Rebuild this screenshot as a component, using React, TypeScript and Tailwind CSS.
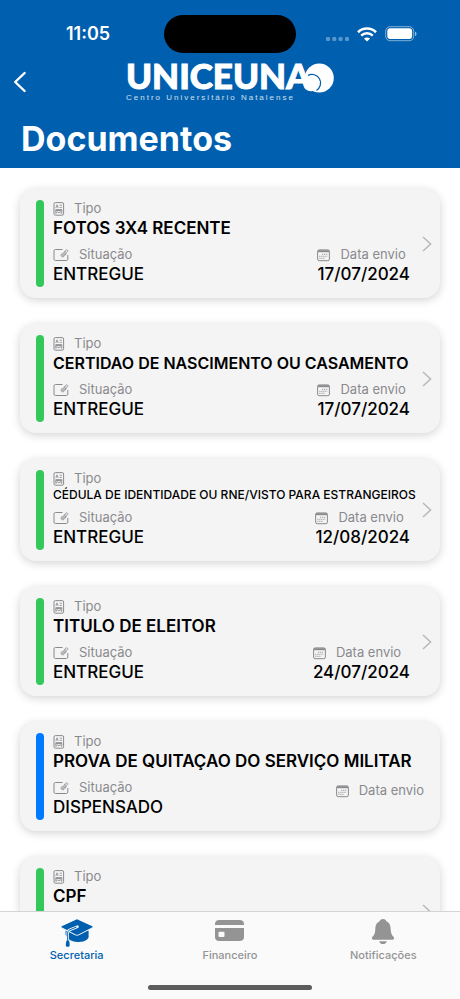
import React from 'react';

type Documento = {
    tipo: string;
    situacao: 'ENTREGUE' | 'DISPENSADO';
    dataEnvio?: string;
    size?: 'md' | 'sm';
};

const documentos: Documento[] = [
    { tipo: 'FOTOS 3X4 RECENTE', situacao: 'ENTREGUE', dataEnvio: '17/07/2024' },
    { tipo: 'CERTIDAO DE NASCIMENTO OU CASAMENTO', situacao: 'ENTREGUE', dataEnvio: '17/07/2024', size: 'md' },
    { tipo: 'CÉDULA DE IDENTIDADE OU RNE/VISTO PARA ESTRANGEIROS', situacao: 'ENTREGUE', dataEnvio: '12/08/2024', size: 'sm' },
    { tipo: 'TITULO DE ELEITOR', situacao: 'ENTREGUE', dataEnvio: '24/07/2024' },
    { tipo: 'PROVA DE QUITAÇAO DO SERVIÇO MILITAR', situacao: 'DISPENSADO' },
    { tipo: 'CPF', situacao: 'ENTREGUE', dataEnvio: '17/07/2024' },
];

const tipoClass = {
    lg: 'text-[17px] leading-5 font-semibold',
    md: 'text-[16px] leading-5 font-semibold',
    sm: 'text-[12px] leading-[13px] font-medium',
};

const TipoIcon = () => (
    <svg width="12" height="14" viewBox="0 0 12 14" fill="none" stroke="currentColor" aria-hidden="true">
        <rect x="1" y="0.6" width="9.6" height="12.6" rx="1.4" />
        <path d="M2.8 5.8 4 2.8l1.2 3M3.2 4.9h1.6M6.6 3.2H9M6.6 5.4H9" strokeWidth="0.8" />
        <path d="M2.8 11.4V7.6h6v3.8l-1.6-1.6-1.4 1.2-1.2-1.2z" strokeWidth="0.9" />
        <path d="M3 8.6h5.6" strokeWidth="1" />
    </svg>
);

const SituacaoIcon = () => (
    <svg width="16" height="14" viewBox="0 0 16 14" fill="none" stroke="currentColor" aria-hidden="true">
        <path d="M9.5 1.5H2.4C1.5 1.5 1 2 1 2.9v8.2c0 .9.5 1.4 1.4 1.4h11c.9 0 1.4-.5 1.4-1.4V7" />
        <path d="m14 3.6-3.300 4c-.8.9-2.200.1-1.500-1.100l3.400-4.200c1.100-1.200 3 0 2.100 1.500M12.800 3.300 9.800 7M8.800 5.400c-1.100 1.300-.9 3.300.7 3.500 1 0 1.600-.5 2.100-1.200l2-2.500" strokeWidth="0.8" />
    </svg>
);

const CalendarioIcon = () => (
    <svg width="13" height="13" viewBox="0 0 13 13" fill="none" stroke="currentColor" aria-hidden="true">
        <rect x="0.6" y="0.9" width="11.8" height="10.8" rx="1.6" />
        <path d="M.8 2.2h11.4" strokeWidth="2" />
        <path d="M5.2 5.3h5.4M2.4 7.3h8.2M2.4 9.3h6" strokeWidth="1" strokeDasharray="1 1" />
    </svg>
);

const ChevronIcon = () => (
    <svg width="10" height="16" viewBox="0 0 10 16" fill="none" stroke="currentColor" strokeWidth="1.5" aria-hidden="true">
        <path d="m1 1 7.6 7L1 15" />
    </svg>
);

const Logo = () => (
    <div className="relative w-[208px] text-white">
        <div className="h-[30px] whitespace-nowrap font-['Lato',sans-serif] text-[35px] leading-6 font-black [-webkit-text-stroke:1px_white]">UNICEUNA</div>
        <div className="whitespace-nowrap font-['Liberation_Sans',sans-serif] text-[8px] leading-[9px] tracking-[2px] text-white/80">Centro Universitário Natalense</div>
        <svg className="absolute top-0 right-0" width="34" height="30" viewBox="0 0 34 30" aria-hidden="true">
            <circle cx="19.3" cy="15" r="14.5" fill="#fff" />
            <circle cx="11" cy="20.5" r="7.8" fill="#fff" />
            <path d="M8 12.4a8.6 8.6 0 0 1 8.4 15" fill="none" stroke="#005fae" strokeWidth="1.2" />
        </svg>
    </div>
);

const StatusBar = () => (
    <div className="grid grid-cols-[1fr_auto_1fr] items-center pt-[15px] text-white">
        <div className="pl-3 text-center text-[18px] leading-6 font-semibold">11:05</div>
        <div className="h-[38px] w-[132px] rounded-full bg-black" />
        <div className="flex items-center gap-2 pl-[30px]">
            <svg width="23" height="18" viewBox="0 0 23 18" fill="#fff" opacity="0.35" aria-hidden="true">
                <rect x="0" y="12" width="4" height="4" rx="1.2" />
                <rect x="6.3" y="12" width="4" height="4" rx="1.2" />
                <rect x="12.6" y="12" width="4" height="4" rx="1.2" />
                <rect x="19" y="12" width="4" height="4" rx="1.2" />
            </svg>
            <svg width="20" height="15" viewBox="0 0 20 15" fill="none" stroke="#fff" strokeWidth="2.6" aria-hidden="true">
                <path d="M1 5.2c5-4.9 13-4.9 18 0" />
                <path d="M4.2 8.6c3.3-3.1 8.3-3.1 11.6 0" />
                <path d="M10 14.6 6.9 11.5c1.7-1.5 4.5-1.5 6.2 0z" fill="#fff" stroke="none" />
            </svg>
            <svg width="32" height="16" viewBox="0 0 32 16" aria-hidden="true">
                <rect x="0.7" y="0.7" width="28" height="14" rx="4.4" fill="none" stroke="#fff" strokeOpacity="0.5" />
                <rect x="2.3" y="2.3" width="24.8" height="10.8" rx="3" fill="#fff" />
                <path d="M30 5.4c2 .8 2 3.8 0 4.6z" fill="#fff" fillOpacity="0.6" />
            </svg>
        </div>
    </div>
);

const Header = () => (
    <header className="shrink-0 bg-[#005fae] pb-[9px]">
        <StatusBar />
        <div className="grid h-[58px] grid-cols-[1fr_auto_1fr] items-center">
            <button type="button" aria-label="Voltar" className="w-10 pl-[13px] text-white">
                <svg width="14" height="22" viewBox="0 0 14 22" fill="none" stroke="currentColor" strokeWidth="2.4" strokeLinecap="round" strokeLinejoin="round">
                    <path d="M11.6 2 2.2 11l9.4 9" />
                </svg>
            </button>
            <Logo />
        </div>
        <h1 className="pt-2 pl-[21px] text-[34px] leading-10 font-bold text-white">Documentos</h1>
    </header>
);

const DocumentoCard = ({ doc }: { doc: Documento }) => (
    <a href="#documento" className="flex rounded-2xl bg-[#f4f4f4] py-[11px] pl-4 shadow-[0_2px_10px_rgba(0,0,0,0.18)]">
        <div className={`w-2 shrink-0 rounded-full ${doc.situacao === 'ENTREGUE' ? 'bg-[#34c759]' : 'bg-[#007aff]'}`} />
        <div className="min-w-0 flex-1 pb-[2px] pl-[9px]">
            <div className="flex h-[18px] items-center gap-[9px] text-[13px] text-[#8a8a8e]">
                <TipoIcon />
                Tipo
            </div>
            <div className={`whitespace-nowrap text-black ${tipoClass[doc.size ?? 'lg']}`}>{doc.tipo}</div>
            <div className="flex justify-between pt-2">
                <div>
                    <div className="flex h-[18px] items-center gap-[10px] text-[13px] text-[#8a8a8e]">
                        <SituacaoIcon />
                        Situação
                    </div>
                    <div className="text-[17px] leading-[21px] font-medium text-black">{doc.situacao}</div>
                </div>
                <div className={doc.dataEnvio ? '' : 'pt-[3px] pr-4'}>
                    <div className="flex h-[18px] items-center gap-[10px] text-[13px] text-[#8a8a8e]">
                        <CalendarioIcon />
                        Data envio
                    </div>
                    {doc.dataEnvio && <div className="text-[17px] leading-[21px] font-medium text-black">{doc.dataEnvio}</div>}
                </div>
            </div>
        </div>
        {doc.dataEnvio && (
            <div className="flex w-[30px] shrink-0 items-center justify-center pl-1 text-[#b8b8ba]">
                <ChevronIcon />
            </div>
        )}
    </a>
);

const SecretariaIcon = () => (
    <svg width="32" height="28" viewBox="0 0 32 28" aria-hidden="true">
        <path d="M4.6 11.5h23v6.8c-.8 3-5.4 4.7-9.6 4.7-5 0-9.4-1.6-10.4-3.6L4.6 16z" fill="currentColor" />
        <path d="M14.6.4c1-.5 1.8-.5 2.8 0L31.2 6.7c1.1.6 1.1 1.6 0 2.2l-13.6 7c-1.1.5-2 .5-3.1 0L.8 8.9c-1.1-.6-1.1-1.6 0-2.2z" fill="currentColor" stroke="#fafafa" strokeWidth="1" />
        <path d="M16.5 7.7 9 10.7c-1.8.8-2.3 1.8-2.3 3.5V21" fill="none" stroke="#fafafa" strokeWidth="2.6" strokeLinecap="round" />
        <path d="M15.5 8.1 9 10.7c-1.8.8-2.3 1.8-2.3 3.5V22" fill="none" stroke="currentColor" strokeWidth="1" />
        <path d="M5.6 21.5h2.3c.7 1.6.8 3.4.7 5.2-.1 1.3-3.600 1.3-3.800 0-.1-1.800.1-3.600.8-5.200z" fill="currentColor" />
    </svg>
);

const FinanceiroIcon = () => (
    <svg width="30" height="28" viewBox="0 0 30 28" fill="currentColor" aria-hidden="true">
        <path d="M4.4 1h20.2C27.4 1 29 2.4 29 5v1H0V5c0-2.6 1.6-4 4.4-4z" />
        <path fillRule="evenodd" d="M0 9h29v9c0 2.5-1.6 4-4.4 4H4.4C1.6 22 0 20.5 0 18zM4.5 12.8a1 1 0 0 0-1 1v3.2a1 1 0 0 0 1 1h4a1 1 0 0 0 1-1v-3.2a1 1 0 0 0-1-1z" />
    </svg>
);

const NotificacoesIcon = () => (
    <svg width="24" height="28" viewBox="0 0 24 28" fill="currentColor" aria-hidden="true">
        <path d="M12 0c-2 0-3.2 1.2-3.5 2.5C5.2 3.8 4.4 6.8 4.3 10.5c-.1 4-1.3 5.6-2.6 7C.2 19.2.8 20.8 2.6 20.8h18.8c1.8 0 2.4-1.6.9-3.3-1.3-1.4-2.5-3-2.6-7-.1-3.7-.9-6.7-4.2-8C15.2 1.2 14 0 12 0zM8.2 22.2h7.6c-.5 1.9-2 2.9-3.8 2.9s-3.3-1-3.8-2.9z" />
    </svg>
);

const tabs = [
    { label: 'Secretaria', href: '#secretaria', Icon: SecretariaIcon, active: true },
    { label: 'Financeiro', href: '#financeiro', Icon: FinanceiroIcon, active: false },
    { label: 'Notificações', href: '#notificacoes', Icon: NotificacoesIcon, active: false },
];

const TabBar = () => (
    <nav className="shrink-0 border-t border-[#d4d4d4] bg-[#fafafa] pt-[7px] pb-[9px]">
        <div className="grid grid-cols-3">
            {tabs.map(({ label, href, Icon, active }) => (
                <a key={label} href={href} className={`flex flex-col items-center text-[11px] leading-4 font-medium ${active ? 'text-[#005fae]' : 'text-[#949494]'}`}>
                    <Icon />
                    {label}
                </a>
            ))}
        </div>
        <div className="mx-auto mt-[22px] h-[5px] w-[164px] rounded-full bg-[#5c5c5c]" />
    </nav>
);

const App = () => {
    return (
        <div className="flex h-screen flex-col bg-white font-['Inter',sans-serif]">
            <Header />
            <main className="min-h-0 flex-1 overflow-y-auto px-5 pt-[21px] [scrollbar-width:none]">
                <div className="flex flex-col gap-[26px] pb-6">
                    {documentos.map((doc) => (
                        <DocumentoCard key={doc.tipo} doc={doc} />
                    ))}
                </div>
            </main>
            <TabBar />
        </div>
    );
};

export default App;
